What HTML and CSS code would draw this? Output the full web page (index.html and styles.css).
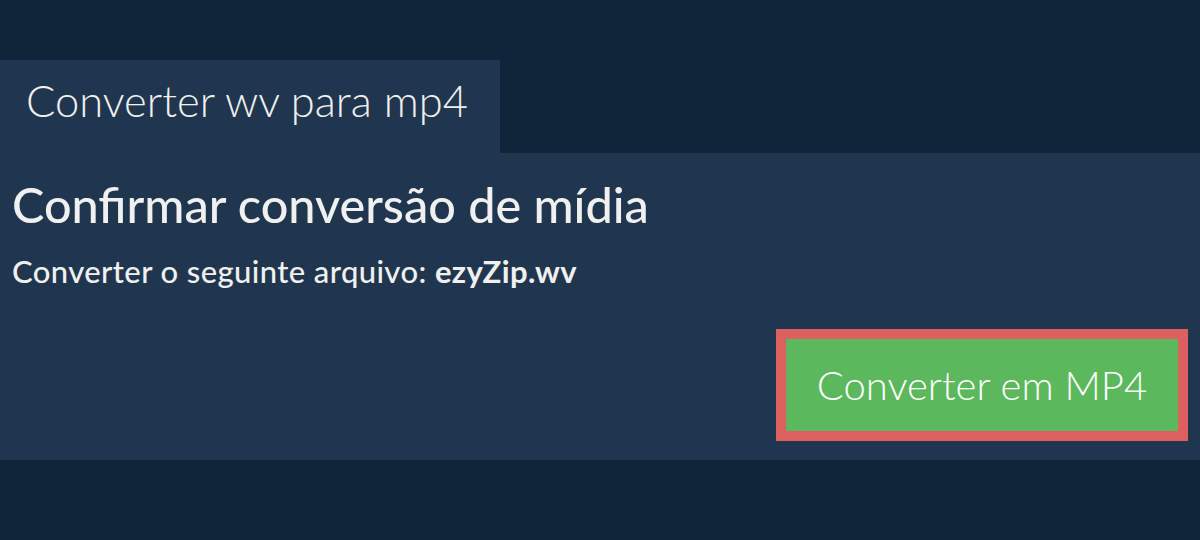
FILE: index.html
```html
<!DOCTYPE html>
<html lang="pt">
<head>
    <meta charset="UTF-8">
    <meta name="viewport" content="width=device-width, initial-scale=1.0">
    <title>Converter wv para mp4</title>
    <link rel="stylesheet" href="styles.css">
</head>
<body>
    <div class="page">
        <div class="tab">Converter wv para mp4</div>

        <div class="panel">
            <h1>Confirmar conversão de mídia</h1>
            <p class="file-line">Converter o seguinte arquivo: <strong>ezyZip.wv</strong></p>

            <div class="actions">
                <button class="convert-btn">Converter em MP4</button>
            </div>
        </div>
    </div>
</body>
</html>
```

FILE: styles.css
```css
body {
    font-family: 'Lato', 'Liberation Sans', sans-serif;
    margin: 0;
    padding: 0;
    background: #10243a;
    color: #f0f0f0;
}

.page {
    padding-top: 60px;
}

.tab {
    display: inline-block;
    width: 500px;
    height: 93px;
    box-sizing: border-box;
    padding: 15px 0 0 26px;
    background: #20364e;
    font-size: 43.5px;
    font-weight: 300;
    line-height: 50px;
}

.panel {
    background: #20364e;
    padding: 21px 12px 19px 12px;
    display: flex;
    flex-direction: column;
}

.panel h1 {
    margin: 0;
    font-size: 48.6px;
    font-weight: 500;
    line-height: 60px;
}

.file-line {
    margin: 19px 0 0 0;
    font-size: 31px;
    font-weight: 500;
    line-height: 36px;
    letter-spacing: 0.4px;
}

.file-line strong {
    font-weight: 700;
}

.actions {
    display: flex;
    justify-content: flex-end;
    margin-top: 40px;
}

.convert-btn {
    width: 412px;
    height: 112px;
    background: #5cb85c;
    border: 10px solid #dc605d;
    color: #fff;
    font-family: 'Lato', 'Liberation Sans', sans-serif;
    font-size: 40px;
    font-weight: 300;
    cursor: pointer;
}
```
